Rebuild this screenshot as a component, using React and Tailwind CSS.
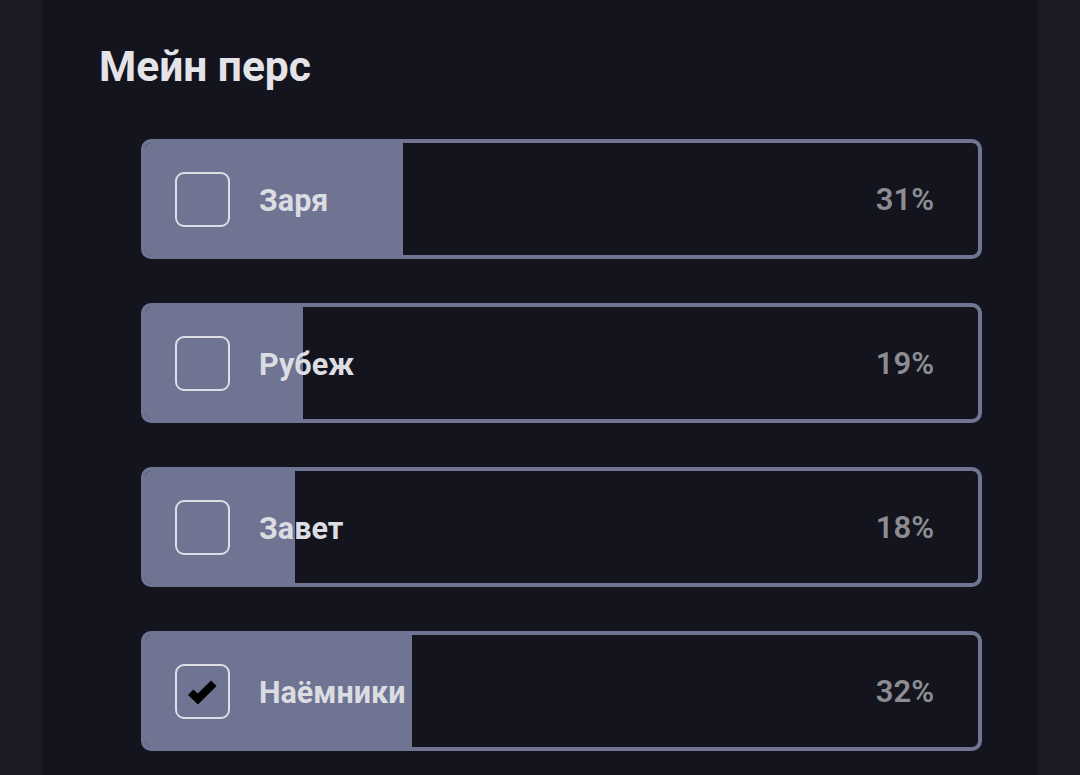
import React from 'react';

const options = [
  { label: 'Заря', percent: 31, checked: false },
  { label: 'Рубеж', percent: 19, checked: false },
  { label: 'Завет', percent: 18, checked: false },
  { label: 'Наёмники', percent: 32, checked: true },
];

const PollOption = ({ label, percent, checked }) => (
  <div className="relative h-[120px] rounded-[10px] border-4 border-[#6f7592] bg-[#13141d] overflow-hidden">
    <div
      className="absolute top-0 bottom-0 left-0 bg-[#6e7491]"
      style={{ width: `${percent}%` }}
    />
    <div className="relative h-full flex items-center pl-[30px] pr-[44px]">
      <div className="w-[55px] h-[55px] rounded-[9px] border-2 border-[#dedee6] flex items-center justify-center">
        {checked && (
          <svg width="36" height="36" viewBox="0 0 24 24">
            <path d="M3.8 12.8 L8.6 17.4 L19.2 6.8" fill="none" stroke="#000" strokeWidth="5.2" strokeLinecap="butt" />
          </svg>
        )}
      </div>
      <span className="ml-[29px] pt-[3px] text-[30.5px] font-bold text-[#dcdce3]">{label}</span>
      <span className="ml-auto pt-[3px] text-[31px] font-semibold text-[#8c8c93]">{percent}%</span>
    </div>
  </div>
);

export default function App() {
  return (
    <div className="min-h-[775px] bg-[#1b1c26] flex justify-center" style={{ fontFamily: 'Roboto, "Noto Sans", sans-serif' }}>
      <div className="w-[996px] min-h-[775px] bg-[#13141d] pl-[57px] pr-[56px]">
        <h1 className="pt-[39px] text-[42.5px] leading-[56px] font-bold text-[#e4e4e8]">Мейн перс</h1>
        <div className="mt-[44px] ml-[42px] flex flex-col gap-[44px]">
          {options.map((o) => (
            <PollOption key={o.label} {...o} />
          ))}
        </div>
      </div>
    </div>
  );
}
